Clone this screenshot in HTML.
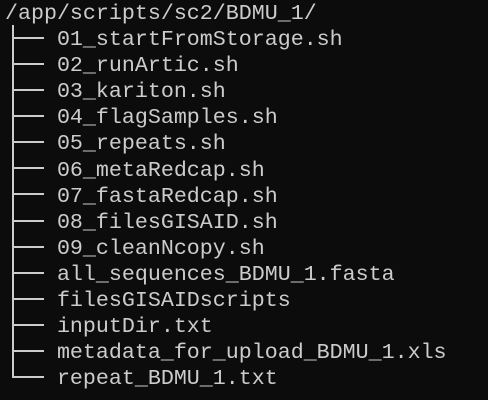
<html><head><style>
body{margin:0;background:#0c0c0c;width:488px;height:400px;overflow:hidden;position:relative}
.t{position:absolute;left:5px;font:21.65px/26.1px "Liberation Mono",monospace;color:#cccccc;white-space:pre}
.v{position:absolute;left:12px;top:25px;width:2px;height:352px;background:#cccccc}
.h{position:absolute;left:12px;width:32px;height:2px;background:#cccccc}
</style></head><body>
<div class="t" style="top:1px">/app/scripts/sc2/BDMU_1/
    01_startFromStorage.sh
    02_runArtic.sh
    03_kariton.sh
    04_flagSamples.sh
    05_repeats.sh
    06_metaRedcap.sh
    07_fastaRedcap.sh
    08_filesGISAID.sh
    09_cleanNcopy.sh
    all_sequences_BDMU_1.fasta
    filesGISAIDscripts
    inputDir.txt
    metadata_for_upload_BDMU_1.xls
    repeat_BDMU_1.txt</div>
<div class="v"></div>
<div class="h" style="top:37px"></div>
<div class="h" style="top:63px"></div>
<div class="h" style="top:89px"></div>
<div class="h" style="top:115px"></div>
<div class="h" style="top:141px"></div>
<div class="h" style="top:167px"></div>
<div class="h" style="top:193px"></div>
<div class="h" style="top:220px"></div>
<div class="h" style="top:246px"></div>
<div class="h" style="top:272px"></div>
<div class="h" style="top:298px"></div>
<div class="h" style="top:324px"></div>
<div class="h" style="top:350px"></div>
<div class="h" style="top:376px"></div>
</body></html>
